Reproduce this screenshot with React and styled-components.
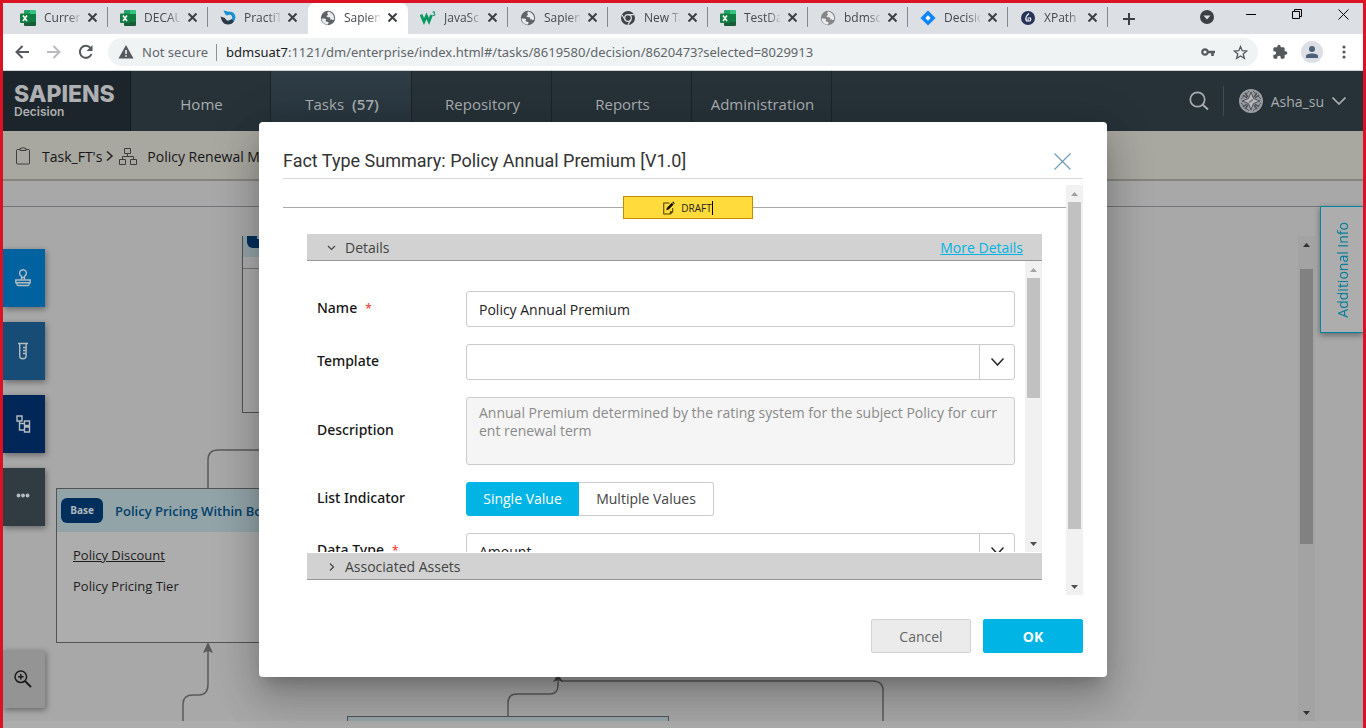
import React from "react";
import styled, { createGlobalStyle, css } from "styled-components";

const sans = `"Open Sans", "Noto Sans", sans-serif`;
const medium = `"Noto Sans", "Open Sans", sans-serif`;

const GlobalStyle = createGlobalStyle`
  *, *::before, *::after { box-sizing: border-box; }
  body { margin: 0; font-family: ${sans}; font-size: 14px; }
  button, input, select, textarea { font: inherit; color: inherit; }
  button { background: none; border: 0; padding: 0; cursor: pointer; }
  svg { display: block; flex: none; }
`;

const Page = styled.div`
  height: 100vh;
  min-height: 700px;
  display: flex;
  flex-direction: column;
  overflow: hidden;
  border: 3px solid #dc1224;
  border-bottom: 0;
  background: #a8a8a8;
`;

/* ---------- browser chrome ---------- */

const TabStrip = styled.div`
  display: flex;
  flex: none;
  height: 31px;
  padding-left: 5px;
  background: #dcdfe4;
`;

const Tab = styled.div`
  display: flex;
  align-items: center;
  flex: 0 1 100px;
  min-width: 0;
  height: 31px;
  padding: 0 11px 2px 12px;
  gap: 8px;
  position: relative;
  color: #45494d;
  background: ${(p) => (p.$active ? "#fff" : "transparent")};
  border-radius: ${(p) => (p.$active ? "7px 7px 0 0" : "0")};
  &::after {
    content: "";
    display: ${(p) => (p.$line ? "block" : "none")};
    position: absolute;
    right: 0;
    top: 4px;
    width: 1px;
    height: 20px;
    background: #85888c;
  }
`;

const TabTitle = styled.span`
  flex: 1;
  min-width: 0;
  overflow: hidden;
  white-space: nowrap;
  font-size: 12px;
  line-height: 18px;
  mask-image: linear-gradient(90deg, #000 65%, rgba(0, 0, 0, 0.15) 100%);
`;

const TabClose = styled.button`
  width: 9px;
  height: 16px;
  display: grid;
  place-items: center;
`;

const NewTab = styled.button`
  width: 42px;
  display: grid;
  place-items: center;
`;

const WindowControls = styled.div`
  margin-left: auto;
  display: flex;
  gap: 6px;
  height: 28px;
`;

const WindowButton = styled.button`
  width: ${(p) => (p.$narrow ? 36 : 40)}px;
  display: flex;
  align-items: center;
  justify-content: center;
  padding-bottom: ${(p) => (p.$narrow ? 0 : 6)}px;
`;

const Toolbar = styled.div`
  display: flex;
  flex: none;
  align-items: center;
  gap: 6px;
  height: 37px;
  padding: 0 3px;
  background: #fff;
  border-bottom: 1px solid #cfd1d2;
`;

const ToolGroup = styled.div`
  display: flex;
`;

const ToolButton = styled.button`
  width: 32px;
  height: 32px;
  display: grid;
  place-items: center;
`;

const AddressBar = styled.div`
  flex: 1;
  display: flex;
  align-items: center;
  height: 28px;
  padding: 0 2px 0 10px;
  border-radius: 14px;
  background: #eff3f4;
  color: #62666a;
  font-family: ${medium};
  font-size: 13px;
`;

const NotSecure = styled.span`
  padding: 0 8px;
  white-space: nowrap;
`;

const AddressField = styled.label`
  flex: 1;
  display: flex;
  align-items: center;
  padding-left: 9px;
  border-left: 1px solid #8d9194;
  line-height: 17px;
`;

const Host = styled.span`
  color: #202124;
`;

const UrlInput = styled.input`
  flex: 1;
  min-width: 0;
  padding: 0;
  border: 0;
  outline: 0;
  background: transparent;
`;

/* ---------- application ---------- */

const AppArea = styled.div`
  position: relative;
  flex: 1;
  min-height: 0;
  display: flex;
  flex-direction: column;
`;

const Header = styled.header`
  display: flex;
  flex: none;
  height: 60px;
  background: #263138;
  color: #a9adaf;
`;

const Brand = styled.a`
  width: 128px;
  padding: 12px 0 0 11px;
  background: #1d252c;
  border-right: 1px solid #141b21;
  color: #adafb1;
  text-decoration: none;
  font-family: Inter, "Liberation Sans", sans-serif;
`;

const BrandName = styled.strong`
  display: block;
  font-size: 23px;
  line-height: 22px;
  font-weight: 800;
`;

const BrandProduct = styled.span`
  display: block;
  font-size: 12px;
  line-height: 14px;
  font-weight: 600;
`;

const MainNav = styled.nav`
  display: flex;
`;

const NavItem = styled.a`
  display: flex;
  align-items: center;
  justify-content: center;
  gap: 8px;
  width: ${(p) => (p.$active ? 141 : 140)}px;
  padding: 6px 0 0 2px;
  border-right: 1px solid #1b2329;
  color: inherit;
  font-size: 15px;
  text-decoration: none;
  background: ${(p) => (p.$active ? "linear-gradient(#2f3d46, #27343c)" : "none")};
  b { font-weight: 600; }
`;

const HeaderTools = styled.div`
  margin-left: auto;
  display: flex;
  align-items: center;
  padding-right: 17px;
`;

const SearchButton = styled.button`
  padding-right: 14px;
`;

const UserButton = styled.button`
  display: flex;
  align-items: center;
  gap: 8px;
  height: 30px;
  padding-left: 15px;
  border-left: 1px solid #434a50;
`;

const Breadcrumb = styled.nav`
  display: flex;
  flex: none;
  align-items: center;
  height: 50px;
  padding: 2px 13px 0;
  background: #a8a7a0;
  border-bottom: 2px solid #84857d;
`;

const Crumb = styled.a`
  display: flex;
  align-items: center;
  gap: ${(p) => p.$gap}px;
  color: #151617;
  text-decoration: none;
  white-space: nowrap;
`;

const SubBar = styled.div`
  flex: none;
  height: 26px;
  border-bottom: 1px solid #747478;
`;

const Workspace = styled.main`
  position: relative;
  flex: 1;
  min-height: 0;
  display: flex;
  padding: 29px 48px 7px 0;
  &::after {
    content: "";
    position: absolute;
    inset: auto 0 0;
    height: 7px;
    background: #adadad;
  }
`;

const Canvas = styled.div`
  position: relative;
  flex: 1;
  overflow: hidden;
`;

const Edges = styled.svg`
  position: absolute;
  left: 0;
  top: 0;
`;

const NodeBox = styled.section`
  position: absolute;
  left: ${(p) => p.$x}px;
  top: ${(p) => p.$y}px;
  width: ${(p) => p.$w}px;
  height: ${(p) => p.$h}px;
  border: 1px solid #535353;
  background: #adadad;
`;

const NodeHeader = styled.div`
  display: flex;
  align-items: center;
  gap: 12px;
  height: 43px;
  padding-left: 4px;
  background: #93a4a8;
  color: #00406b;
  font-size: 13px;
  line-height: 18px;
  font-weight: 600;
  white-space: nowrap;
`;

const NodeBadge = styled.span`
  width: 42px;
  height: 25px;
  border-radius: 6px;
  background: #002f5c;
  color: #b3b9be;
  font-size: 10px;
  font-weight: 700;
  line-height: 25px;
  text-align: center;
`;

const NodeBody = styled.div`
  display: flex;
  flex-direction: column;
  align-items: flex-start;
  padding: 8px 16px;
  font-size: 13px;
  line-height: 31px;
  color: #1d1d1d;
  a { color: inherit; }
`;

const NodeDivider = styled.div`
  height: 12px;
  border-bottom: 1px solid #77777b;
`;

const SideTools = styled.div`
  position: absolute;
  left: 0;
  top: 42px;
  bottom: 20px;
  display: flex;
  flex-direction: column;
  gap: 15px;
`;

const SideButton = styled.button`
  width: 42px;
  height: 58px;
  display: grid;
  place-items: center;
  padding-right: 2px;
  background: ${(p) => p.$bg};
  color: ${(p) => p.$fg || "#b4bcc2"};
  box-shadow: 1px 2px 6px rgba(0, 0, 0, 0.4);
  &:last-child { margin-top: auto; }
`;

const InfoTab = styled.button`
  position: absolute;
  right: 0;
  top: -1px;
  width: 43px;
  height: 127px;
  padding-left: 2px;
  border: 1px solid #0083a5;
  border-right: 0;
  background: #adadad;
  color: #007c9c;
  box-shadow: 0 2px 6px rgba(0, 0, 0, 0.4);
  display: flex;
  align-items: center;
  justify-content: center;
  span {
    writing-mode: vertical-rl;
    transform: rotate(180deg);
    line-height: 20px;
  }
`;

/* ---------- scrollbars ---------- */

const Track = styled.div`
  display: flex;
  flex: none;
  flex-direction: column;
  align-items: center;
  width: 17px;
  background: ${(p) => (p.$dim ? "#a3a3a3" : "#f1f1f1")};
`;

const Thumb = styled.div`
  flex: ${(p) => p.$size} 0 0;
  width: 13px;
  background: ${(p) => (p.$dim ? "#818181" : "#c1c1c1")};
`;

const Space = styled.div`
  flex: ${(p) => p.$size} 0 0;
`;

const ArrowCell = styled.div`
  height: 17px;
  display: grid;
  place-items: center;
`;

function Scrollbar({ before = 0, thumb, after, dim, topColor = "#a3a3a3" }) {
  return (
    <Track $dim={dim} aria-hidden="true">
      <ArrowCell>
        <svg width="7" height="4"><path d="M0 4L3.5 0L7 4Z" fill={topColor} /></svg>
      </ArrowCell>
      <Space $size={before} />
      <Thumb $size={thumb} $dim={dim} />
      <Space $size={after} />
      <ArrowCell>
        <svg width="7" height="4"><path d="M0 0L3.5 4L7 0Z" fill={dim ? "#303030" : "#505050"} /></svg>
      </ArrowCell>
    </Track>
  );
}

/* ---------- dialog ---------- */

const Overlay = styled.div`
  position: absolute;
  inset: 0;
  display: flex;
  align-items: center;
  justify-content: center;
`;

const Dialog = styled.div`
  width: 848px;
  max-width: 100%;
  padding: 0 24px 24px;
  border-radius: 4px;
  background: #fff;
  color: #333;
  box-shadow: 0 11px 15px -7px rgba(0, 0, 0, 0.2), 0 24px 38px 3px rgba(0, 0, 0, 0.14),
    0 9px 46px 8px rgba(0, 0, 0, 0.12);
`;

const DialogHead = styled.div`
  display: flex;
  align-items: center;
  justify-content: space-between;
  height: 57px;
  padding: 22px 12px 0 0;
  border-bottom: 1px solid #d9d9d9;
`;

const DialogTitle = styled.h2`
  margin: 0;
  font: 400 18px/24px Roboto, sans-serif;
  color: #333;
`;

const ScrollPane = styled.div`
  display: flex;
  height: 410px;
  margin-top: 6px;
`;

const PaneContent = styled.div`
  flex: 1;
  min-width: 0;
`;

const StatusRow = styled.div`
  display: flex;
  align-items: center;
  height: 23px;
  margin-top: 11px;
`;

const Rule = styled.div`
  flex: ${(p) => p.$grow};
  height: 1px;
  background: #a9a9a9;
`;

const StatusBadge = styled.div`
  display: flex;
  align-items: center;
  justify-content: center;
  gap: 6px;
  width: 130px;
  height: 23px;
  border: 1px solid #c08c00;
  background: #ffdb3c;
  color: #222;
  font-size: 10px;
  span { border-right: 1px solid #000; line-height: 14px; }
`;

const Accordion = styled.div`
  display: flex;
  flex-direction: column;
  gap: 1px;
  margin: 15px 24px 0;
`;

const PanelHead = styled.div`
  display: flex;
  align-items: center;
  justify-content: space-between;
  height: 27px;
  padding: 0 19px 0 20px;
  border-bottom: 1px solid #989898;
  background: #d2d2d2;
  a { color: #00b2e3; }
`;

const PanelToggle = styled.button`
  display: flex;
  align-items: center;
  gap: 8px;
  color: #444;
`;

const PanelBody = styled.div`
  display: flex;
  height: 291px;
  overflow: hidden;
`;

const Form = styled.form`
  flex: 1;
  min-width: 0;
  display: flex;
  flex-direction: column;
  gap: 17px;
  padding: 30px 10px 0;
`;

const FormRow = styled.div`
  display: grid;
  grid-template-columns: 149px 1fr;
  align-items: center;
`;

const Label = styled.label`
  padding-bottom: 2px;
  color: #161616;
  font-family: ${medium};
  font-weight: 500;
  line-height: 18px;
`;

const Required = styled.span`
  margin-left: 8px;
  font-size: 12px;
  color: #f44336;
`;

const control = css`
  display: block;
  width: 100%;
  border: 1px solid #ccc;
  border-radius: 3px;
  outline: 0;
  padding: 0 12px;
  color: #222;
`;

const TextInput = styled.input`
  ${control}
  height: 36px;
`;

const TextArea = styled.textarea`
  ${control}
  height: 68px;
  padding: 6px 12px;
  line-height: 18px;
  word-break: break-all;
  resize: none;
  overflow: hidden;
  background: #f5f5f5;
  color: #8a8a8a;
`;

const SelectBox = styled.div`
  position: relative;
`;

const Select = styled.select`
  ${control}
  height: 36px;
  appearance: none;
  background: #fff;
`;

const SelectArrow = styled.span`
  position: absolute;
  right: 0;
  top: 0;
  width: 36px;
  height: 36px;
  display: grid;
  place-items: center;
  border-left: 1px solid #ccc;
  pointer-events: none;
`;

const Segments = styled.div`
  display: flex;
`;

const Segment = styled.button`
  height: 34px;
  width: ${(p) => (p.$active ? 113 : 135)}px;
  padding-bottom: 2px;
  border: 1px solid ${(p) => (p.$active ? "#00b5e5" : "#ccc")};
  border-left-width: ${(p) => (p.$active ? 1 : 0)}px;
  border-radius: ${(p) => (p.$active ? "3px 0 0 3px" : "0 3px 3px 0")};
  background: ${(p) => (p.$active ? "#00b5e5" : "#fff")};
  color: ${(p) => (p.$active ? "#fff" : "#444")};
  font-weight: ${(p) => (p.$active ? 500 : 400)};
`;

const DialogActions = styled.div`
  display: flex;
  justify-content: flex-end;
  gap: 12px;
  margin-top: 24px;
`;

const ActionButton = styled.button`
  width: 100px;
  height: 34px;
  border: 1px solid ${(p) => (p.$primary ? "#00b5e5" : "#d2d2d2")};
  border-radius: 2px;
  background: ${(p) => (p.$primary ? "#00b5e5" : "#ebebeb")};
  color: ${(p) => (p.$primary ? "#fff" : "#666")};
  font-weight: ${(p) => (p.$primary ? 700 : 400)};
`;

/* ---------- icons ---------- */

const Cross = ({ size = 8, w = 2, color = "#3c4043" }) => (
  <svg width={size} height={size} viewBox={`0 0 ${size} ${size}`} stroke={color} strokeWidth={w}>
    <path d={`M.5 .5L${size - 0.5} ${size - 0.5}M${size - 0.5} .5L.5 ${size - 0.5}`} />
  </svg>
);

const Chevron = ({ w = 12, h = 7, stroke = 1.5, color = "#222" }) => (
  <svg width={w} height={h} viewBox={`0 0 ${w} ${h}`} fill="none" stroke={color} strokeWidth={stroke}>
    <path d={`M.5 .5L${w / 2} ${h - 1}L${w - 0.5} .5`} />
  </svg>
);

const ExcelIcon = () => (
  <svg width="16" height="16" viewBox="0 0 16 16">
    <path fill="#21a366" d="M5 0h5v8H4V1q0-1 1-1z" />
    <path fill="#33c481" d="M10 0h5q1 0 1 1v3h-6z" />
    <path fill="#107c41" d="M10 4h6v4h-6z" />
    <path fill="#185c37" d="M4 8h12v7q0 1-1 1H5q-1 0-1-1z" />
    <path fill="#107c41" d="M10 8h6v4h-6z" />
    <rect y="3.500" width="10" height="9.500" rx="1" fill="#107c41" />
    <path d="M3 5.500l4 5.500M7 5.500l-4 5.500" stroke="#fff" strokeWidth="1.500" />
  </svg>
);

const GlobeIcon = ({ color = "#5f6368" }) => (
  <svg width="16" height="16" viewBox="0 0 16 16">
    <circle cx="8" cy="8" r="7.200" fill={color} />
    <path fill="#e9ebee" d="M8.500 1.500c-1.300.6-1.600 1.800-.7 2.600.7.700-.6 1.200-1.100 1.900-.4.800.5 1.300 1.600 1.200 1.500-.1 2 .6 2 1.500 0 .8 1.400.4 1.900 1 .5.500 1.300 0 2-.3.200-3.700-1.900-6.700-5.700-7.900zM1.600 8.400c1.800 0 3.500 0 4.200.6.800.7-.2 1.400-.1 2.100.2 1 1.700.4 2.500 1 .7.600.2 1.600-.3 2.400C4.200 14.300 1.700 11.700 1.600 8.400z" />
  </svg>
);

const PractiIcon = () => (
  <svg width="16" height="16" viewBox="0 0 16 16" fill="none">
    <path d="M6 4.500c4-3 7.500-.5 7.800 2.500.2 2.500-1.500 4.500-4.300 4.500" stroke="#1c8fd0" strokeWidth="3.200" />
    <path d="M.5 6.500l4.500 1.500c.3 2.500 4 3.500 6.500 1.500l2.500 1.500c-2 4.500-9.500 5-12 0z" fill="#2b3a48" />
    <path d="M3.500 .5l4.500 1-2.500 3.500z" fill="#1c8fd0" />
  </svg>
);

const W3Icon = () => (
  <svg width="16" height="16" viewBox="0 0 16 16" fill="none" stroke="#059862">
    <path d="M1 4.500l3 7 2.500-5.500 2.500 5.500 2.500-6.500" strokeWidth="2.800" />
    <path d="M12.500 2h2.500l-1.300 1.600q1.800.2 1.200 1.500-.8.900-2.300.2" strokeWidth="1" />
  </svg>
);

const ChromeIcon = () => (
  <svg width="16" height="16" viewBox="0 0 16 16">
    <circle cx="8" cy="8" r="7" fill="#3f4347" />
    <circle cx="8" cy="8" r="3.300" fill="#3f4347" stroke="#dcdfe4" strokeWidth="1.300" />
    <path d="M8 4.600h6.300M5 9.800L1.900 4.800M11 9.700l-3.200 5.200" stroke="#dcdfe4" strokeWidth="1.100" />
  </svg>
);

const JiraIcon = () => (
  <svg width="16" height="16" viewBox="0 0 16 16">
    <path d="M8 .5L15.500 8 8 15.500.5 8z" fill="#0a84ff" />
    <path d="M8 5.300L10.700 8 8 10.700 5.300 8z" fill="#fff" />
  </svg>
);

const XPathIcon = () => (
  <svg width="16" height="16" viewBox="0 0 16 16" fill="none">
    <circle cx="8" cy="8" r="7" fill="#28335a" />
    <path d="M9 3.500L6.500 6q-1.500 2.500 0 5h3.500q1.500-1.500.5-3H7.500M7.500 9.800h1.500" stroke="#fff" strokeWidth="1.100" />
  </svg>
);

const tabs = [
  { title: "Current", icon: <ExcelIcon />, line: true },
  { title: "DECAU", icon: <ExcelIcon />, line: true },
  { title: "PractiTest", icon: <PractiIcon /> },
  { title: "Sapiens", icon: <GlobeIcon />, active: true },
  { title: "JavaScript", icon: <W3Icon />, line: true },
  { title: "Sapiens", icon: <GlobeIcon />, line: true },
  { title: "New Tab", icon: <ChromeIcon />, line: true },
  { title: "TestData", icon: <ExcelIcon />, line: true },
  { title: "bdmsdm", icon: <GlobeIcon color="#858585" />, line: true },
  { title: "Decision", icon: <JiraIcon />, line: true },
  { title: "XPath in", icon: <XPathIcon />, line: true },
];

function BrowserChrome() {
  return (
    <>
      <TabStrip>
        {tabs.map((t, i) => (
          <Tab key={i} $active={t.active} $line={t.line}>
            {t.icon}
            <TabTitle>{t.title}</TabTitle>
            <TabClose aria-label={`Close ${t.title}`}><Cross size={9} /></TabClose>
          </Tab>
        ))}
        <NewTab aria-label="New tab">
          <svg width="12" height="12" stroke="#3c4043" strokeWidth="2"><path d="M6 0v12M0 6h12" /></svg>
        </NewTab>
        <WindowControls>
          <WindowButton $narrow aria-label="Search tabs">
            <svg width="14" height="14"><circle cx="7" cy="7" r="7" fill="#3c4043" /><path d="M3.500 5.500h7L7 9.500z" fill="#dcdfe4" /></svg>
          </WindowButton>
          <WindowButton aria-label="Minimise">
            <svg width="10" height="10"><path d="M0 5.500h10" stroke="#000" /></svg>
          </WindowButton>
          <WindowButton aria-label="Restore">
            <svg width="10" height="10" fill="none" stroke="#000"><path d="M.5 2.500h7v7h-7zM2.500 2.500v-2h7v7h-2" /></svg>
          </WindowButton>
          <WindowButton aria-label="Close window"><Cross size={11} w={1} color="#000" /></WindowButton>
        </WindowControls>
      </TabStrip>
      <Toolbar>
        <ToolGroup>
          <ToolButton aria-label="Back">
            <svg width="14" height="14" fill="none" stroke="#55595d" strokeWidth="2"><path d="M14 7H2M7.500 1L1.500 7l6 6" /></svg>
          </ToolButton>
          <ToolButton aria-label="Forward">
            <svg width="14" height="14" fill="none" stroke="#b9bbbd" strokeWidth="2"><path d="M0 7h12M6.500 1l6 6-6 6" /></svg>
          </ToolButton>
          <ToolButton aria-label="Reload">
            <svg width="16" height="16" fill="none" stroke="#55595d" strokeWidth="2"><path d="M13.500 10A6 6 0 1 1 12.500 4" /><path d="M14.500 1v6h-6z" fill="#55595d" stroke="none" /></svg>
          </ToolButton>
        </ToolGroup>
        <AddressBar>
          <svg width="16" height="14" viewBox="0 0 16 14"><path d="M8 0l7.500 13.500H.5z" fill="#55595d" /><path d="M8 5v4M8 10.200v1.600" stroke="#eff3f4" strokeWidth="1.600" /></svg>
          <NotSecure>Not secure</NotSecure>
          <AddressField>
            <Host>bdmsuat7</Host>
            <UrlInput
              aria-label="Address"
              defaultValue=":1121/dm/enterprise/index.html#/tasks/8619580/decision/8620473?selected=8029913"
            />
          </AddressField>
          <ToolButton aria-label="Passwords">
            <svg width="14" height="8" viewBox="0 0 14 8"><circle cx="4" cy="4" r="2.700" fill="none" stroke="#55595d" strokeWidth="2.200" /><path d="M7 2.700h7v2.600h-1.200V8h-2.600V5.300H7z" fill="#55595d" /></svg>
          </ToolButton>
          <ToolButton aria-label="Bookmark">
            <svg width="15" height="15" viewBox="0 0 15 15" fill="none" stroke="#55595d" strokeWidth="1.300"><path d="M7.500 1.500l1.700 4.200 4.500.3-3.500 2.900 1.200 4.400-3.900-2.400-3.900 2.400 1.200-4.400L1.300 6l4.500-.3z" /></svg>
          </ToolButton>
        </AddressBar>
        <ToolGroup>
          <ToolButton aria-label="Extensions">
            <svg width="16" height="16" viewBox="0 0 24 24" fill="#55595d"><path d="M20.500 11H19V7c0-1.100-.9-2-2-2h-4V3.500a2.500 2.500 0 0 0-5 0V5H4c-1.100 0-2 .9-2 2v3.800h1.500a2.700 2.700 0 0 1 0 5.400H2V20c0 1.100.9 2 2 2h3.800v-1.500a2.700 2.700 0 0 1 5.400 0V22H17c1.100 0 2-.9 2-2v-4h1.500a2.500 2.500 0 0 0 0-5z" /></svg>
          </ToolButton>
          <ToolButton aria-label="Profile">
            <svg width="22" height="22"><circle cx="11" cy="11" r="11" fill="#dcdfe4" /><circle cx="11" cy="8" r="3" fill="#4d5f7d" /><path d="M5 17v-2q0-2.500 6-2.500t6 2.500v2z" fill="#4d5f7d" /></svg>
          </ToolButton>
          <ToolButton aria-label="Menu">
            <svg width="4" height="14" fill="#55595d"><circle cx="2" cy="2" r="1.600" /><circle cx="2" cy="7" r="1.600" /><circle cx="2" cy="12" r="1.600" /></svg>
          </ToolButton>
        </ToolGroup>
      </Toolbar>
    </>
  );
}

const AvatarIcon = () => (
  <svg width="24" height="24" viewBox="0 0 24 24" fill="none">
    <circle cx="12" cy="12" r="12" fill="#9a9da0" />
    <g stroke="#4c5156" strokeWidth="1">
      <path d="M4 6l4 3M6 4l3 4M20 6l-4 3M18 4l-3 4M4 18l4-3M6 20l3-4M20 18l-4-3M18 20l-3-4" strokeWidth="1.400" />
      <path d="M2 10q2-1 3-4M22 10q-2-1-3-4M2 14q2 1 3 4M22 14q-2 1-3 4M10 2q-1 2-4 3M14 2q1 2 4 3M10 22q-1-2-4-3M14 22q1-2 4-3" />
      <path d="M12 3l2.500 6.500L21 12l-6.500 2.500L12 21l-2.500-6.500L3 12l6.500-2.500z" fill="#b6b8ba" />
    </g>
    <path d="M10 13.500l4-3" stroke="#6c7074" strokeWidth="1.500" />
  </svg>
);

function AppHeader() {
  return (
    <Header>
      <Brand href="#home">
        <BrandName>SAPIENS</BrandName>
        <BrandProduct>Decision</BrandProduct>
      </Brand>
      <MainNav>
        <NavItem href="#home">Home</NavItem>
        <NavItem href="#tasks" $active>Tasks <b>(57)</b></NavItem>
        <NavItem href="#repository">Repository</NavItem>
        <NavItem href="#reports">Reports</NavItem>
        <NavItem href="#administration">Administration</NavItem>
      </MainNav>
      <HeaderTools>
        <SearchButton aria-label="Search">
          <svg width="20" height="20" fill="none" stroke="#a9adaf" strokeWidth="1.700"><circle cx="8.500" cy="8.500" r="7.200" /><path d="M13.500 13.500l5.500 5" strokeWidth="2" /></svg>
        </SearchButton>
        <UserButton>
          <AvatarIcon />
          Asha_su
          <Chevron w={14} h={8} stroke={1.7} color="#a9adaf" />
        </UserButton>
      </HeaderTools>
    </Header>
  );
}

function Diagram() {
  return (
    <Canvas>
      <Edges width="1290" height="485" fill="none" stroke="#5a5a5a" strokeWidth="1.500">
        <path d="M205 252V224Q205 214 215 214H400" />
        <path d="M205 412V448Q205 459 196 459H190Q180 459 180 468V485" />
        <path d="M205 406l5 11-5-2-5 2z" fill="#5a5a5a" stroke="none" />
        <path d="M555 440V449Q555 458 547 458H514Q505 458 505 467V481" />
        <path d="M558 445H871Q881 446 880 456V485" />
        <path d="M555 438l5 8-5-2-5 2z" fill="#444" stroke="none" />
      </Edges>
      <NodeBox $x={239} $y={-23} $w={320} $h={200}>
        <NodeHeader><NodeBadge>Base</NodeBadge></NodeHeader>
        <NodeDivider />
      </NodeBox>
      <NodeBox $x={53} $y={252} $w={304} $h={155}>
        <NodeHeader><NodeBadge>Base</NodeBadge>Policy Pricing Within Bounds</NodeHeader>
        <NodeBody>
          <a href="#discount">Policy Discount</a>
          <span>Policy Pricing Tier</span>
        </NodeBody>
      </NodeBox>
      <NodeBox $x={344} $y={480} $w={322} $h={155}>
        <NodeHeader />
      </NodeBox>
    </Canvas>
  );
}

function SideToolbar() {
  return (
    <SideTools>
      <SideButton $bg="#00639f" aria-label="Approve">
        <svg width="16" height="18" viewBox="0 0 16 18" fill="none" stroke="currentColor" strokeWidth="1.400">
          <path d="M6.500 8.500V7.200a3.400 3.400 0 1 1 3 0V8.500M6.300 10.500l.4-2h2.600l.4 2" />
          <path d="M.8 11h14.400v2.700H.8zM2 14v1.300q0 1.200 1.300 1.200h9.400q1.300 0 1.300-1.200V14" />
        </svg>
      </SideButton>
      <SideButton $bg="#174c76" aria-label="Test">
        <svg width="10" height="18" viewBox="0 0 10 18" fill="none" stroke="currentColor" strokeWidth="1.400">
          <path d="M0 1.500h10M1.700 2v11.500a3.200 3.200 0 0 0 6.400 0V2M8 5.500H5M8 8.500H5M8 11.500H5" />
        </svg>
      </SideButton>
      <SideButton $bg="#002757" aria-label="Hierarchy">
        <svg width="15" height="18" viewBox="0 0 15 18" fill="none" stroke="currentColor" strokeWidth="1.400">
          <path d="M1 1h5v5H1zM8.500 6h5v4.500h-5zM8.500 12h5v5h-5zM3.500 6v9h5M3.500 8.500h5" />
        </svg>
      </SideButton>
      <SideButton $bg="#303b42" aria-label="More">
        <svg width="14" height="8" fill="currentColor"><circle cx="2.500" cy="2.500" r="1.900" /><circle cx="7" cy="2.500" r="1.900" /><circle cx="11.500" cy="2.500" r="1.900" /></svg>
      </SideButton>
      <SideButton $bg="#949494" $fg="#1c1c1c" aria-label="Zoom in">
        <svg width="18" height="18" fill="none" stroke="currentColor" strokeWidth="1.500"><circle cx="6.800" cy="6.800" r="5.800" /><path d="M11 11l6 6" strokeWidth="2" /><path d="M6.800 4v5.600M4 6.800h5.600" /></svg>
      </SideButton>
    </SideTools>
  );
}

function SelectField({ id, value }) {
  return (
    <SelectBox>
      <Select id={id} defaultValue={value}><option>{value}</option></Select>
      <SelectArrow><Chevron w={13} h={8} /></SelectArrow>
    </SelectBox>
  );
}

function FactTypeDialog() {
  return (
    <Overlay>
      <Dialog role="dialog" aria-labelledby="dialog-title">
        <DialogHead>
          <DialogTitle id="dialog-title">Fact Type Summary: Policy Annual Premium [V1.0]</DialogTitle>
          <button aria-label="Close dialog"><Cross size={17} w={1.2} color="#6f9dbb" /></button>
        </DialogHead>
        <ScrollPane>
          <PaneContent>
            <StatusRow>
              <Rule $grow={340} />
              <StatusBadge>
                <svg width="12" height="14" viewBox="0 0 13 14" fill="none" stroke="#4a3d00">
                  <path d="M7 1.500H.8v12H8l2.500-2.500V7M8 13.500V11h2.500" strokeWidth="1.100" />
                  <path d="M3.500 9.500l.8-2.800L9.500 1.300l2 2L6.200 8.700z" fill="#111" stroke="none" />
                  <path d="M10 .8l1-.8 1.800 1.800-.8 1z" fill="#111" stroke="none" />
                </svg>
                <span>DRAFT</span>
              </StatusBadge>
              <Rule $grow={313} />
            </StatusRow>
            <Accordion>
              <div>
                <PanelHead>
                  <PanelToggle aria-expanded="true">
                    <svg width="10" height="10" fill="none" stroke="#444" strokeWidth="1.200"><path d="M1 4l3.500 3.500L8 4" /></svg>
                    Details
                  </PanelToggle>
                  <a href="#more">More Details</a>
                </PanelHead>
                <PanelBody>
                  <Form>
                    <FormRow>
                      <Label htmlFor="name">Name<Required>*</Required></Label>
                      <TextInput id="name" defaultValue="Policy Annual Premium" />
                    </FormRow>
                    <FormRow>
                      <Label htmlFor="template">Template</Label>
                      <SelectField id="template" value="" />
                    </FormRow>
                    <FormRow>
                      <Label htmlFor="description">Description</Label>
                      <TextArea
                        id="description"
                        readOnly
                        value="Annual Premium determined by the rating system for the subject Policy for current renewal term"
                      />
                    </FormRow>
                    <FormRow>
                      <Label as="span" id="list-label">List Indicator</Label>
                      <Segments role="group" aria-labelledby="list-label">
                        <Segment type="button" $active aria-pressed="true">Single Value</Segment>
                        <Segment type="button" aria-pressed="false">Multiple Values</Segment>
                      </Segments>
                    </FormRow>
                    <FormRow>
                      <Label htmlFor="datatype">Data Type<Required>*</Required></Label>
                      <SelectField id="datatype" value="Amount" />
                    </FormRow>
                  </Form>
                  <Scrollbar thumb={120} after={137} />
                </PanelBody>
              </div>
              <PanelHead>
                <PanelToggle aria-expanded="false">
                  <svg width="10" height="10" fill="none" stroke="#444" strokeWidth="1.200"><path d="M3 2.500L6.500 6L3 9.500" /></svg>
                  Associated Assets
                </PanelToggle>
              </PanelHead>
            </Accordion>
          </PaneContent>
          <Scrollbar thumb={327} after={49} />
        </ScrollPane>
        <DialogActions>
          <ActionButton>Cancel</ActionButton>
          <ActionButton $primary>OK</ActionButton>
        </DialogActions>
      </Dialog>
    </Overlay>
  );
}

export default function App() {
  return (
    <Page>
      <GlobalStyle />
      <BrowserChrome />
      <AppArea>
        <AppHeader />
        <Breadcrumb aria-label="Breadcrumb">
          <Crumb href="#task" $gap={12}>
            <svg width="14" height="18" fill="none" stroke="#3c3d3d" strokeWidth="1"><rect x=".5" y="2.500" width="13" height="14.500" rx="1" /><path d="M4 3.500V1.500Q7 0 10 1.500v2z" fill="#a8a7a0" /></svg>
            Task_FT's
          </Crumb>
          <svg width="17" height="12" fill="none" stroke="#222" strokeWidth="1.500"><path d="M5 1.500l5 4.500-5 4.500" /></svg>
          <Crumb href="#policy" $gap={10}>
            <svg width="18" height="17" fill="none" stroke="#3c3d3d"><path d="M5.500 .5h6v5h-6zM.5 11.500h6v5h-6zM11.500 11.500h6v5h-6zM8.500 5.500v3M3.500 11.500v-3h11v3" /></svg>
            Policy Renewal Method
          </Crumb>
        </Breadcrumb>
        <SubBar />
        <Workspace>
          <Diagram />
          <Scrollbar dim before={16} thumb={275} after={160} topColor="#303030" />
          <SideToolbar />
          <InfoTab><span>Additional Info</span></InfoTab>
        </Workspace>
        <FactTypeDialog />
      </AppArea>
    </Page>
  );
}
